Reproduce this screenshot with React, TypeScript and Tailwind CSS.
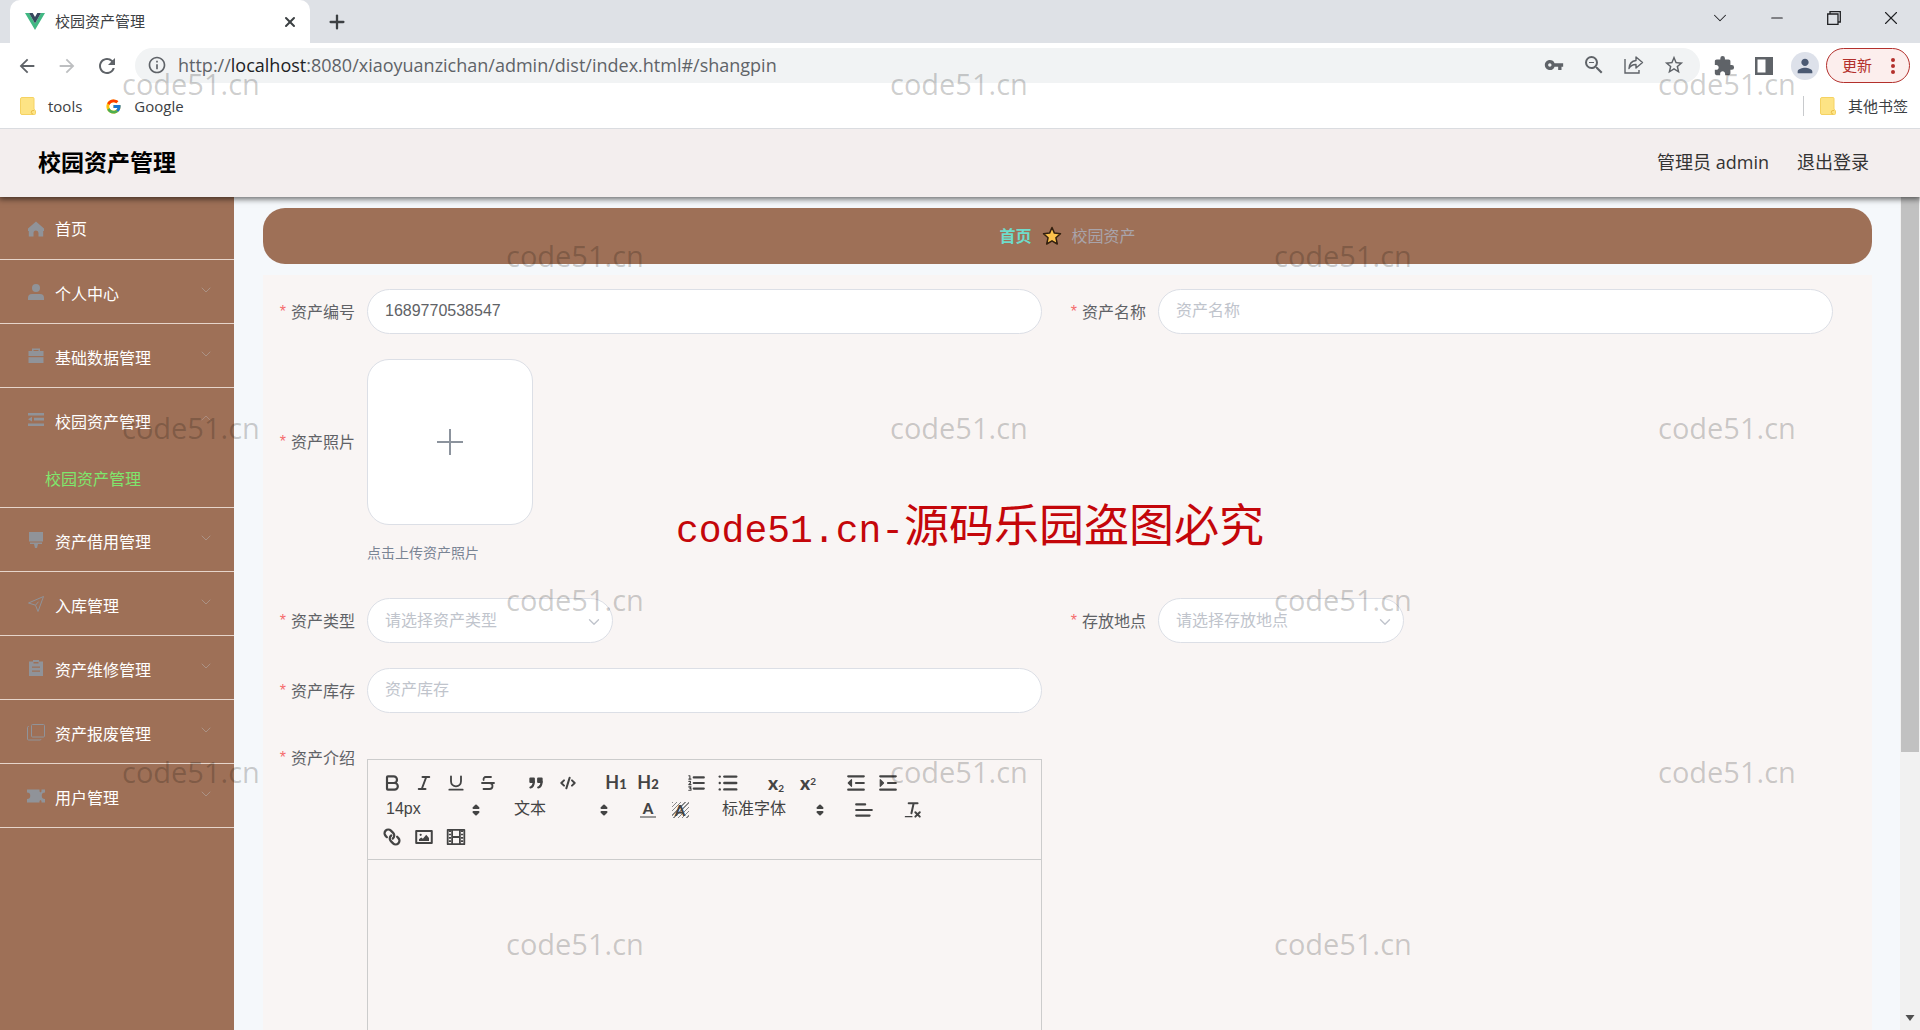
import React from 'react'
import {
  Bold,
  ChevronDown,
  ChevronUp,
  CodeXml,
  Italic,
  Link as LinkIcon,
  List,
  Minus,
  Plus,
  Strikethrough,
  Underline,
  X,
} from 'lucide-react'
import {
  MdArrowBack,
  MdArrowForward,
  MdExtension,
  MdInfoOutline,
  MdOutlineZoomOut,
  MdPerson,
  MdRefresh,
  MdStarBorder,
  MdVpnKey,
} from 'react-icons/md'
import { FcGoogle } from 'react-icons/fc'

const menu = [
  { name: '个人中心', icon: 'user' },
  { name: '基础数据管理', icon: 'case' },
  { name: '校园资产管理', icon: 'fold', children: ['校园资产管理'] },
  { name: '资产借用管理', icon: 'platform' },
  { name: '入库管理', icon: 'position' },
  { name: '资产维修管理', icon: 'order' },
  { name: '资产报废管理', icon: 'copy' },
  { name: '用户管理', icon: 'ticket' },
]

const menuIcons: Record<string, React.ReactNode> = {
  home: <path fill="currentColor" d="M9 1.500 1 8.500V11h.8v5.500H6.500V13a2.500 2.500 0 0 1 5 0v3.500h4.700V11h.8V8.500Z" />,
  user: (
    <g fill="currentColor">
      <circle cx="9" cy="5" r="4" />
      <path d="M1 17v-2a4 4 0 0 1 4-4h8a4 4 0 0 1 4 4v2Z" />
    </g>
  ),
  case: (
    <g fill="currentColor">
      <path d="M5 4V1.500h8V4h3.500v5h-15V4Zm1.500 0h5V3h-5Z" />
      <path d="M1.500 10.200h15V16h-15Z" />
    </g>
  ),
  fold: <path fill="currentColor" d="M1 2h16v2.600H1Zm6 4.800h10v2.800H7Zm-6 1.400 4-2.400v4.800ZM1 12.400h16V15H1Z" />,
  platform: <path fill="currentColor" d="M2 1h14v9.500H2Zm1 10.500h12V13h-4l-1 4H8l-1-4H3Z" />,
  position: <path fill="none" stroke="currentColor" strokeLinejoin="round" d="M16.500 1.500 1.500 8l7 2.200 2.500 6.300Z M8.500 10.200l3-3.500" />,
  order: (
    <path
      fill="currentColor"
      fillRule="evenodd"
      d="M6 1h6v1.500h4V17H2V2.500h4ZM6.500 3v1.500h5V3ZM5 7.500v1.200h8V7.500Zm0 4v1.200h8v-1.200Z"
    />
  ),
  copy: (
    <g fill="none" stroke="currentColor">
      <rect x="4.500" y="1.500" width="13" height="12.500" rx="1" />
      <path d="M2 3.500H1.500a1 1 0 0 0-1 1V16a1 1 0 0 0 1 1H13a1 1 0 0 0 1-1" />
    </g>
  ),
  ticket: (
    <path
      fill="currentColor"
      d="M0 2.500h12.500v2l1 1 1-1v-2H18v3a3 3 0 0 0 0 6.500v3.500h-3.500v-1.500l-1-1-1 1v1.500H0V12a3 3 0 0 0 0-6.500Z"
    />
  ),
}

function MenuIcon({ name }: { name: string }) {
  return (
    <svg viewBox="0 0 18 18" className="h-[18px] w-[18px] shrink-0 text-[#909399]">
      {menuIcons[name]}
    </svg>
  )
}

function FolderIcon() {
  return (
    <svg viewBox="0 0 16 18" className="h-[18px] w-4">
      <path fill="#fde384" stroke="#f5d262" d="M2 .5h11a1 1 0 0 1 1 1V12l1.500 2v2.500a1 1 0 0 1-1 1H2a1.500 1.500 0 0 1-1.500-1.500V2A1.500 1.500 0 0 1 2 .5Z" />
      <path fill="none" stroke="#e9bd49" d="M13 17a1.500 1.500 0 0 1 0-3.500h1" />
    </svg>
  )
}

function BrowserChrome() {
  return (
    <div className="relative z-10 shrink-0 bg-white">
      <div className="flex h-[43px] justify-between bg-[#dee1e6] pl-[10px]">
        <div className="flex">
          <div className="flex w-[300px] items-center rounded-t-[10px] bg-white pl-[15px] pr-3">
            <svg viewBox="0 0 20 17" className="h-[17px] w-5">
              <path fill="#41b883" d="M0 0h4l6 10.500L16 0h4L10 17Z" />
              <path fill="#35495e" d="M4 0h3.700L10 4l2.300-4H16l-6 10.500Z" />
            </svg>
            <span className="ml-[10px] flex-1 text-[15px] text-[#3c4043]">校园资产管理</span>
            <button aria-label="关闭标签页">
              <X className="h-4 w-4 text-[#3c4043]" strokeWidth={3} />
            </button>
          </div>
          <button aria-label="新标签页" className="ml-4">
            <Plus className="h-[22px] w-[22px] text-[#3c4043]" strokeWidth={2.500} />
          </button>
        </div>
        <div className="flex h-9 pr-px text-[#202124]">
          <button aria-label="搜索标签页" className="flex w-[57px] items-center justify-center">
            <ChevronDown className="h-[22px] w-[22px]" strokeWidth={1.100} />
          </button>
          <button aria-label="最小化" className="flex w-[57px] items-center justify-center">
            <Minus className="h-[18px] w-[18px]" strokeWidth={1.500} />
          </button>
          <button aria-label="还原" className="flex w-[57px] items-center justify-center">
            <svg viewBox="0 0 14 14" className="h-[14px] w-[14px]" fill="none" stroke="currentColor" strokeWidth="1.300">
              <path d="M.7 3h10.300v10.300H.7Z M3 3V.7h10.300V11H11" />
            </svg>
          </button>
          <button aria-label="关闭" className="flex w-[57px] items-center justify-center">
            <X className="h-[22px] w-[22px]" strokeWidth={1.200} />
          </button>
        </div>
      </div>

      <div className="flex items-center pl-[7px] pr-[10px] pt-[5px]">
        <button aria-label="后退" className="flex w-10 justify-center">
          <MdArrowBack className="h-[22px] w-[22px] text-[#5f6368]" />
        </button>
        <button aria-label="前进" className="flex w-10 justify-center">
          <MdArrowForward className="h-[22px] w-[22px] text-[#bdbfc1]" />
        </button>
        <button aria-label="重新加载" className="flex w-10 justify-center">
          <MdRefresh className="h-6 w-6 text-[#5f6368]" />
        </button>
        <div className="ml-2 flex h-[35px] flex-1 items-center rounded-full bg-[#f1f3f4] pb-px pl-3 pr-[6px] text-[#5f6368]">
          <MdInfoOutline className="h-5 w-5" />
          <span className="ml-[11px] flex-1 text-[18px] leading-6">
            http://<span className="text-[#202124]">localhost</span>:8080/xiaoyuanzichan/admin/dist/index.html#/shangpin
          </span>
          <button aria-label="密码" className="flex w-10 justify-center">
            <MdVpnKey className="h-5 w-5" />
          </button>
          <button aria-label="缩放" className="flex w-10 justify-center">
            <MdOutlineZoomOut className="h-6 w-6" />
          </button>
          <button aria-label="分享" className="flex w-10 justify-center">
            <svg viewBox="0 0 20 18" className="h-[18px] w-5" fill="none" stroke="currentColor" strokeWidth="1.400">
              <path d="M1 3v14h14v-3" />
              <path strokeLinejoin="round" d="M12 4.500V1l6.500 5.500L12 12V8.500c-3.500 0-5.500 1-7 4 .3-4.500 3-7.500 7-8Z" />
            </svg>
          </button>
          <button aria-label="收藏" className="flex w-10 justify-center">
            <MdStarBorder className="h-[22px] w-[22px]" />
          </button>
        </div>
        <button aria-label="扩展程序" className="ml-1 flex w-10 justify-center">
          <MdExtension className="h-[22px] w-[22px] text-[#5f6368]" />
        </button>
        <button aria-label="侧边栏" className="flex w-10 justify-center">
          <svg viewBox="0 0 18 18" className="h-[18px] w-[18px]">
            <path fill="#5f6368" fillRule="evenodd" d="M0 0h18v18H0ZM2.500 2.500v13h8v-13Z" />
          </svg>
        </button>
        <button aria-label="个人资料" className="mx-[7px] flex h-7 w-7 items-center justify-center rounded-full bg-[#dde1ea]">
          <MdPerson className="h-[22px] w-[22px] text-[#4b5a73]" />
        </button>
        <button className="flex h-[35px] w-[84px] items-center justify-between rounded-full border border-[#b3302c] bg-[#fceeed] pl-[15px] pr-[14px] text-[15px] text-[#b3302c]">
          更新
          <svg viewBox="0 0 4 16" className="h-4 w-1" fill="currentColor">
            <circle cx="2" cy="2" r="2" />
            <circle cx="2" cy="8" r="2" />
            <circle cx="2" cy="14" r="2" />
          </svg>
        </button>
      </div>

      <div className="flex h-[46px] items-center border-b border-[#dadce0] pl-5 pr-3 pt-px text-[15px] leading-5 text-[#3c4043]">
        <a href="#tools" className="flex items-center gap-3">
          <FolderIcon />
          tools
        </a>
        <a href="#google" className="ml-[23px] flex items-center gap-3">
          <FcGoogle className="h-[17px] w-[17px]" />
          Google
        </a>
        <a href="#other" className="ml-auto flex items-center gap-3 border-l border-[#c8cacd] pl-4">
          <FolderIcon />
          其他书签
        </a>
      </div>
    </div>
  )
}

function Sidebar() {
  return (
    <nav className="w-[234px] shrink-0 bg-[#9e7057] text-[16px] text-white">
      <a href="#/" className="flex h-[63px] items-center gap-[10px] border-b border-[#e6d5cb] pl-[27px] pt-[2px]">
        <MenuIcon name="home" />
        首页
      </a>
      {menu.map((item) => (
        <div key={item.name} className="border-b border-[#e6d5cb]">
          <button className="flex h-[63px] w-full items-center pl-[27px] pr-5">
            <MenuIcon name={item.icon} />
            <span className="ml-[10px] flex-1 pt-1 text-left">{item.name}</span>
            {item.children ? (
              <ChevronUp className="mb-1 h-4 w-4 text-[#ab8b7d]" strokeWidth={1.500} />
            ) : (
              <ChevronDown className="mb-1 h-4 w-4 text-[#ab9285]" strokeWidth={1.500} />
            )}
          </button>
          {item.children?.map((child) => (
            <a key={child} href="#/shangpin" className="block h-14 pl-[45px] leading-[56px] text-[#7ee76c]">
              {child}
            </a>
          ))}
        </div>
      ))}
    </nav>
  )
}

function Field({
  id,
  label,
  labelClass = 'h-[45px]',
  className = '',
  children,
}: {
  id: string
  label: string
  labelClass?: string
  className?: string
  children: React.ReactNode
}) {
  return (
    <div className={`flex items-start pr-[25px] ${className}`}>
      <label htmlFor={id} className={`flex w-[91px] shrink-0 items-center justify-end gap-[5px] pr-3 text-[16px] text-[#606266] ${labelClass}`}>
        <span className="font-['Liberation_Sans'] text-[#f56c6c]">*</span>
        {label}
      </label>
      {children}
    </div>
  )
}

const inputClass =
  "h-[45px] w-full min-w-0 rounded-full border border-[#dcdfe6] bg-white px-[17px] pb-[2px] font-['Liberation_Sans','Noto_Sans_CJK_SC',sans-serif] text-[16px] text-[#606266] placeholder:text-[#c0c4cc] focus:outline-none"

function SelectBox({ id, placeholder }: { id: string; placeholder: string }) {
  return (
    <div className="relative w-[246px]">
      <select
        id={id}
        className="h-[45px] w-full appearance-none rounded-full border border-[#dcdfe6] bg-white px-[17px] pb-[2px] text-[16px] text-[#c0c4cc] focus:outline-none"
      >
        <option>{placeholder}</option>
      </select>
      <ChevronDown className="pointer-events-none absolute right-[10px] top-[15px] h-[18px] w-[18px] text-[#c0c4cc]" strokeWidth={1.800} />
    </div>
  )
}

function Tool({ label, children }: { label: string; children: React.ReactNode }) {
  return (
    <button type="button" aria-label={label} className="flex h-[27px] w-8 items-center justify-center">
      {children}
    </button>
  )
}

function ToolSvg({ children }: { children: React.ReactNode }) {
  return (
    <svg viewBox="0 0 18 18" className="h-5 w-5" fill="none" stroke="currentColor" strokeWidth="2" strokeLinecap="round" strokeLinejoin="round">
      {children}
    </svg>
  )
}

function Picker({ label, value, className }: { label: string; value: string; className: string }) {
  return (
    <div className={`relative h-[27px] ${className}`}>
      <select aria-label={label} className="h-full w-full appearance-none pb-[2px] pl-[10px] font-['Liberation_Sans','Noto_Sans_CJK_SC',sans-serif] text-[16px] focus:outline-none">
        <option>{value}</option>
      </select>
      <svg viewBox="0 0 8 12" className="pointer-events-none absolute right-2 top-2 h-3 w-2" fill="currentColor">
        <path d="M1.500 4 4 1.500 6.500 4ZM1.500 8 4 10.500 6.500 8Z" stroke="currentColor" strokeWidth="2" strokeLinejoin="round" />
      </svg>
    </div>
  )
}

function Editor() {
  return (
    <div className="mt-[21px] min-w-0 flex-1 border border-[#cccccc] text-[#444444]">
      <div className="border-b border-[#cccccc] px-2 py-[9px]">
        <div className="flex gap-4">
          <div className="flex">
            <Tool label="加粗"><Bold className="h-5 w-5" strokeWidth={2.600} /></Tool>
            <Tool label="斜体"><Italic className="h-[18px] w-[18px]" strokeWidth={2.600} /></Tool>
            <Tool label="下划线"><Underline className="h-5 w-5" strokeWidth={2.200} /></Tool>
            <Tool label="删除线"><Strikethrough className="h-[18px] w-[18px]" strokeWidth={2.400} /></Tool>
          </div>
          <div className="flex">
            <Tool label="引用">
              <ToolSvg>
                <path fill="currentColor" d="M4 5h3v3H4ZM11 5h3v3h-3Z" />
                <path fill="currentColor" d="M7 8c0 4-3 5-3 5M14 8c0 4-3 5-3 5" />
              </ToolSvg>
            </Tool>
            <Tool label="代码"><CodeXml className="h-4 w-4" strokeWidth={3} /></Tool>
          </div>
          <div className="flex font-['Lato'] font-bold">
            <Tool label="标题一"><span className="text-[18px] leading-5">H<span className="text-[13px] font-black">1</span></span></Tool>
            <Tool label="标题二"><span className="text-[18px] leading-5">H<span className="text-[13px] font-black">2</span></span></Tool>
          </div>
          <div className="flex">
            <Tool label="有序列表">
              <ToolSvg>
                <path d="M7 4h9M7 9h9M7 14h9" />
                <path strokeWidth="1" d="M2.500 2.500h1v3M2.500 5.500h2M2.500 7.500h1.500v1.500L2.500 10.500h2M2.500 12.500h2l-1 1.300 1 .2v1.500h-2" />
              </ToolSvg>
            </Tool>
            <Tool label="无序列表"><List className="h-[22px] w-[22px]" strokeWidth={2.600} /></Tool>
          </div>
          <div className="flex font-['Lato'] font-black">
            <Tool label="下标"><span className="text-[19px] leading-5">x<sub className="text-[10px] font-bold">2</sub></span></Tool>
            <Tool label="上标"><span className="text-[19px] leading-5">x<sup className="text-[10px] font-bold">2</sup></span></Tool>
          </div>
          <div className="flex">
            <Tool label="减少缩进">
              <ToolSvg>
                <path d="M2 3h14M2 15h14M9 9h7" />
                <path fill="currentColor" strokeWidth="1" d="M5 6v6L2 9Z" />
              </ToolSvg>
            </Tool>
            <Tool label="增加缩进">
              <ToolSvg>
                <path d="M2 3h14M2 15h14M9 9h7" />
                <path fill="currentColor" strokeWidth="1" d="M2 6v6l3-3Z" />
              </ToolSvg>
            </Tool>
          </div>
        </div>
        <div className="flex gap-4">
          <Picker label="字号" value="14px" className="w-28" />
          <Picker label="段落" value="文本" className="w-28" />
          <div className="flex font-['Lato'] font-black">
            <Tool label="文字颜色">
              <span className="w-4 border-b-2 border-[#999999] text-[15px] leading-[15px]">A</span>
            </Tool>
            <Tool label="背景颜色">
              <span className="h-4 w-[17px] bg-[repeating-linear-gradient(135deg,#888_0_1px,transparent_1px_3px)] text-[15px] leading-4">A</span>
            </Tool>
          </div>
          <Picker label="字体" value="标准字体" className="w-[120px]" />
          <Tool label="对齐">
            <ToolSvg>
              <path d="M2 4h8M2 9h14M2 14h12" />
            </ToolSvg>
          </Tool>
          <Tool label="清除格式">
            <ToolSvg>
              <path strokeWidth="1.800" d="M6 3h8M10.500 3 8.500 12M12 11l4 4M16 11l-4 4" />
              <path strokeWidth="1" d="M3 15h6" />
            </ToolSvg>
          </Tool>
        </div>
        <div className="flex">
          <Tool label="链接"><LinkIcon className="h-[18px] w-[18px] rotate-90" strokeWidth={3} /></Tool>
          <Tool label="图片">
            <ToolSvg>
              <path d="M2 3.500h14v11H2Z" strokeWidth="1.800" />
              <circle cx="6" cy="7" r="1" fill="currentColor" stroke="none" />
              <path fill="currentColor" stroke="none" d="M4.500 12.500V11l2-1.500L8 10.500 11 7l2.500 3v2.500Z" />
            </ToolSvg>
          </Tool>
          <Tool label="视频">
            <ToolSvg>
              <path strokeWidth="1.600" d="M1.500 2.500h15v13h-15ZM5.500 2.500v13M12.500 2.500v13M5.500 9h7" />
              <path strokeWidth="2" strokeDasharray="1.500 1.500" strokeLinecap="butt" d="M3.500 3v12M14.500 3v12" />
            </ToolSvg>
          </Tool>
        </div>
      </div>
      <textarea id="intro" className="block h-[400px] w-full resize-none p-4 focus:outline-none" />
    </div>
  )
}

function AssetForm() {
  return (
    <form className="mt-[11px] grid grid-cols-2 gap-y-[25px] bg-[#f9f5f4] pb-10 pl-[13px] pr-[14px] pt-[14px]">
      <Field id="code" label="资产编号">
        <input id="code" className={inputClass} defaultValue="1689770538547" />
      </Field>
      <Field id="name" label="资产名称">
        <input id="name" className={inputClass} placeholder="资产名称" />
      </Field>
      <Field id="photo" label="资产照片" labelClass="h-[166px]" className="col-span-2">
        <div>
          <button id="photo" type="button" aria-label="上传资产照片" className="flex h-[166px] w-[166px] items-center justify-center rounded-[22px] border border-[#dcdfe6] bg-white">
            <svg viewBox="0 0 26 26" className="h-[26px] w-[26px]" stroke="#8c939d" strokeWidth="2">
              <path d="M13 0v26M0 13h26" />
            </svg>
          </button>
          <p className="h-12 pt-2 text-[14px] leading-10 text-[#7a8494]">点击上传资产照片</p>
        </div>
      </Field>
      <Field id="type" label="资产类型">
        <SelectBox id="type" placeholder="请选择资产类型" />
      </Field>
      <Field id="place" label="存放地点">
        <SelectBox id="place" placeholder="请选择存放地点" />
      </Field>
      <Field id="stock" label="资产库存" className="col-start-1">
        <input id="stock" className={inputClass} placeholder="资产库存" />
      </Field>
      <Field id="intro" label="资产介绍" labelClass="h-10" className="col-start-1">
        <Editor />
      </Field>
    </form>
  )
}

// tiled marks, alternate rows are shifted by half a column
function Watermarks() {
  const rows = [0, 1, 2, 3, 4, 5]
  return (
    <div aria-hidden="true" className="pointer-events-none absolute inset-0 z-20 overflow-hidden pt-16">
      {rows.map((row) => (
        <div key={row} className={`flex h-[172px] items-start text-[29px] leading-10 text-black/20 ${row % 2 ? 'pl-[506px]' : 'pl-[122px]'}`}>
          <span className="w-[768px] shrink-0">code51.cn</span>
          <span className="w-[768px] shrink-0">code51.cn</span>
          {row % 2 === 0 && <span className="shrink-0">code51.cn</span>}
        </div>
      ))}
      <p className="absolute left-[676px] top-[493px] flex items-baseline whitespace-nowrap leading-[60px] text-[#c4060a]">
        <span className="font-['Liberation_Mono',monospace] text-[38px]">code51.cn-</span>
        <span className="font-['Noto_Sans_CJK_SC',sans-serif] text-[45px]">源码乐园盗图必究</span>
      </p>
    </div>
  )
}

export default function App() {
  return (
    <div className="relative flex h-screen flex-col overflow-hidden font-['Open_Sans','Noto_Sans_CJK_SC',sans-serif]">
      <BrowserChrome />
      <header className="relative flex h-[68px] shrink-0 items-center justify-between bg-[#f3eeee] pb-[2px] pl-[38px] pr-[51px] shadow-[0_1px_6px_1px_rgba(0,0,0,0.6)]">
        <h1 className="text-[23px] font-bold text-black">校园资产管理</h1>
        <div className="flex gap-7 text-[18px] text-[#333333]">
          <span>管理员 admin</span>
          <button>退出登录</button>
        </div>
      </header>
      <div className="flex min-h-0 flex-1">
        <Sidebar />
        <main className="min-w-0 flex-1 overflow-hidden bg-[#f5f8fb] pl-[29px] pr-7 pt-[11px]">
          <div className="flex h-14 items-center justify-center gap-[10px] rounded-[22px] bg-[#9e7057] text-[16px]">
            <a href="#/" className="font-bold text-[#6fdccb]">首页</a>
            <svg viewBox="0 0 20 20" className="h-5 w-5">
              <path
                fill="#fcc24c"
                stroke="#33200f"
                strokeWidth="1.500"
                strokeLinejoin="round"
                d="m10 1.500 2.400 5.600 6.100.6-4.600 4 1.400 6.300L10 14.800 4.700 18l1.400-6.300-4.600-4 6.100-.6Z"
              />
            </svg>
            <span className="text-[#a9a4aa]">校园资产</span>
          </div>
          <AssetForm />
        </main>
        <div className="flex w-5 flex-col justify-between bg-[#f1f1f1] px-px">
          <div className="h-2/3 bg-[#c1c1c1]" />
          <svg viewBox="0 0 18 22" className="h-[22px] w-[18px]">
            <path fill="#505050" d="M4.500 7h9L9 13Z" />
          </svg>
        </div>
      </div>
      <Watermarks />
    </div>
  )
}
